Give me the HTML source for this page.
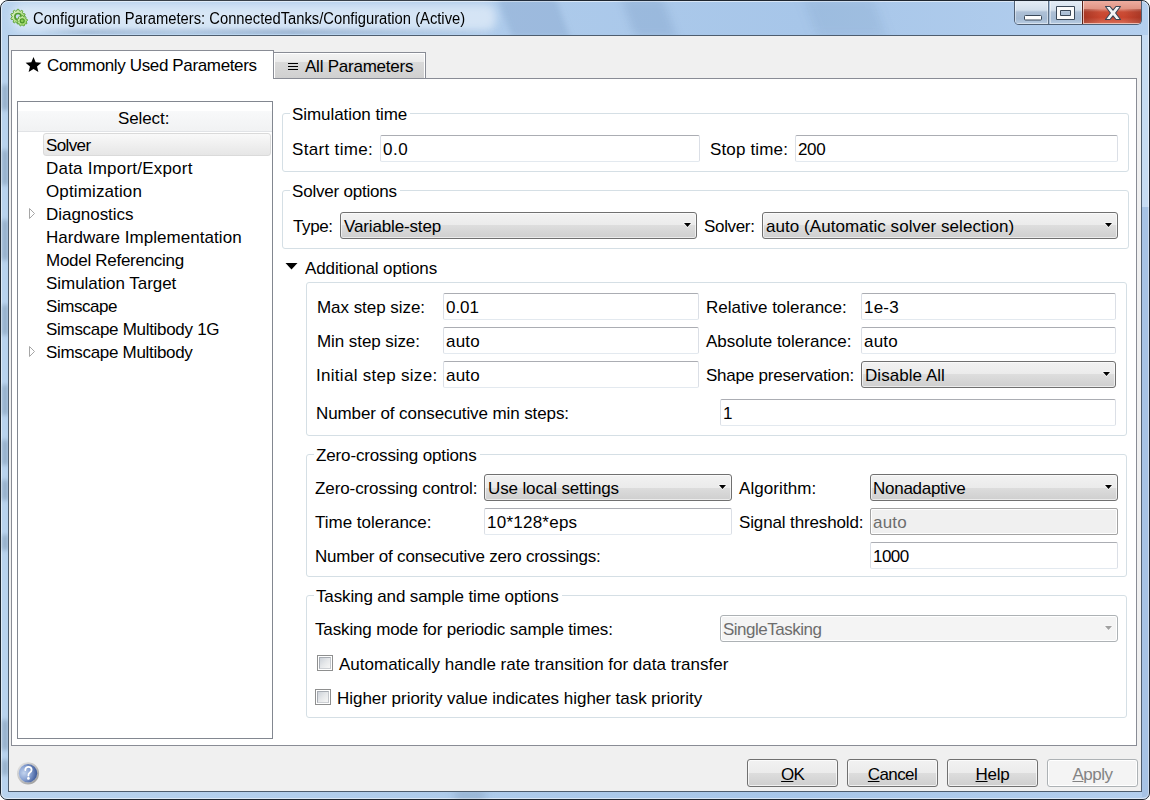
<!DOCTYPE html>
<html><head><meta charset="utf-8">
<style>
*{margin:0;padding:0;box-sizing:border-box}
html,body{width:1150px;height:800px;overflow:hidden;background:#ffffff}
body{position:relative;font-family:"Liberation Sans",sans-serif;font-size:17px;color:#000}
.a{position:absolute}
.t{position:absolute;white-space:nowrap;font-size:17px;line-height:17px;color:#000}
.grp{position:absolute;border:1px solid #d5dfe5;border-radius:3px}
.gt{position:absolute;background:#fff;padding:0 3px 0 2px;white-space:nowrap;font-size:17px;line-height:17px}
.fld{position:absolute;background:#fff;border:1px solid #dbdfe6;border-top-color:#abadb3;border-bottom-color:#e3e9ef;border-radius:2px}
.fld span,.cmb span{position:absolute;left:3px;top:5px;white-space:nowrap;font-size:17px;line-height:17px}
.cmb{position:absolute;border:1px solid #707070;border-radius:3px;
 background:linear-gradient(#f2f2f2 0%,#ebebeb 50%,#dddddd 50%,#cfcfcf 100%);box-shadow:inset 0 0 0 1px rgba(255,255,255,.6)}
.arr{position:absolute;width:0;height:0;border-left:3.5px solid transparent;border-right:3.5px solid transparent;border-top:4px solid #000}
.btn{position:absolute;border:1px solid #707070;border-radius:3px;
 background:linear-gradient(#f2f2f2 0%,#ebebeb 50%,#dddddd 50%,#cfcfcf 100%);box-shadow:inset 0 0 0 1px rgba(255,255,255,.7)}
.btn span{position:absolute;left:0;right:0;top:6px;text-align:center;font-size:17px;line-height:17px}
.chk{position:absolute;width:16px;height:16px;border:1px solid #8e8f8f;background:#fff}
.chk i{position:absolute;left:1px;top:1px;width:12px;height:12px;border:1px solid;border-color:#a7acb3 #c3c7cc #cdd0d4 #a7acb3;background:linear-gradient(135deg,#cdd2d9 0%,#e6e8ea 50%,#f6f6f6 100%)}
u{text-decoration:underline;text-decoration-thickness:1px;text-underline-offset:1px}
</style></head><body>
<!-- window frame -->
<div class="a" style="left:0;top:0;width:1150px;height:800px;border:1px solid #1e2630;border-radius:8px 8px 7px 7px;background:linear-gradient(90deg,#b9d3ee 0%,#aecbeb 40%,#a7c6e9 70%,#b4cfee 100%);overflow:hidden"></div>
<div class="a" style="left:1px;top:1px;width:1148px;height:798px;border:1px solid rgba(255,255,255,.55);border-radius:7px 7px 6px 6px"></div>
<div class="a" style="left:0;top:0;width:1150px;height:35px;overflow:hidden">
  <div class="a" style="left:505px;top:-2px;width:58px;height:40px;background:rgba(60,95,140,.14);filter:blur(3px);transform:skewX(20deg)"></div>
  <div class="a" style="left:628px;top:-2px;width:42px;height:40px;background:rgba(60,95,140,.14);filter:blur(5px);transform:skewX(20deg)"></div>
  <div class="a" style="left:810px;top:-2px;width:70px;height:40px;background:rgba(60,95,140,.10);filter:blur(6px);transform:skewX(20deg)"></div>
  <div class="a" style="left:12px;top:4px;width:484px;height:27px;border-radius:10px;background:rgba(238,245,252,.6);filter:blur(4px)"></div>
</div>
<!-- icon -->
<svg class="a" style="left:9px;top:8px" width="20" height="20" viewBox="0 0 20 20">
  <defs><linearGradient id="gg" x1="0" y1="0" x2="1" y2="1"><stop offset="0" stop-color="#ecf8d8"/><stop offset="1" stop-color="#8fcf58"/></linearGradient>
  <linearGradient id="gg2" x1="0" y1="0" x2="1" y2="1"><stop offset="0" stop-color="#e4f6cc"/><stop offset="1" stop-color="#8ed24e"/></linearGradient></defs>
  <polygon points="14.87,9.19 16.11,10.23 15.68,11.54 14.06,11.63 13.40,12.53 13.80,14.10 12.68,14.90 11.31,14.03 10.25,14.37 9.65,15.87 8.27,15.86 7.68,14.35 6.63,14.00 5.25,14.86 4.14,14.05 4.55,12.48 3.90,11.57 2.28,11.46 1.87,10.15 3.12,9.12 3.13,8.01 1.89,6.97 2.32,5.66 3.94,5.57 4.60,4.67 4.20,3.10 5.32,2.30 6.69,3.17 7.75,2.83 8.35,1.33 9.73,1.34 10.32,2.85 11.37,3.20 12.75,2.34 13.86,3.15 13.45,4.72 14.10,5.63 15.72,5.74 16.13,7.05 14.88,8.08" fill="url(#gg)" stroke="#5fa53a" stroke-width="1" stroke-linejoin="round"/>
  <circle cx="9" cy="8.6" r="3.1" fill="#c9dcf0" stroke="#4f9a2e" stroke-width="1.7"/>
  <polygon points="17.31,14.07 18.00,15.06 17.42,16.00 16.23,15.85 15.53,16.41 15.42,17.61 14.38,17.97 13.56,17.08 12.66,17.07 11.81,17.91 10.78,17.51 10.72,16.31 10.05,15.72 8.85,15.83 8.31,14.85 9.04,13.90 8.91,13.01 7.92,12.32 8.14,11.23 9.31,10.97 9.77,10.20 9.46,9.04 10.33,8.35 11.40,8.90 12.25,8.61 12.76,7.52 13.86,7.54 14.33,8.65 15.16,8.98 16.25,8.47 17.09,9.20 16.73,10.35 17.16,11.13 18.32,11.45 18.49,12.54 17.48,13.19" fill="url(#gg2)" stroke="#5fa53a" stroke-width="1" stroke-linejoin="round"/>
  <circle cx="13.2" cy="12.8" r="2.0" fill="#8ccf55" stroke="#4a9428" stroke-width="1.2"/>
</svg>
<div class="t" style="left: 33px; top: 11px; font-size: 16px; line-height: 16px; transform:scaleX(0.922); transform-origin:0 0;">Configuration Parameters: ConnectedTanks/Configuration (Active)</div>
<!-- caption buttons -->
<div class="a" style="left:1014px;top:0;width:128px;height:25px;border:1px solid #4f5f73;border-top:none;border-radius:0 0 5px 5px;overflow:hidden;background:#a9c0da">
  <div class="a" style="left:0;top:0;width:34px;height:24px;background:linear-gradient(#e6eef7 0%,#d3dfec 42%,#adc0d6 50%,#a3b9d2 78%,#b9cde3 100%);border-right:1px solid #5d6f84;box-shadow:inset 0 0 0 1px rgba(255,255,255,.45)"></div>
  <div class="a" style="left:35px;top:0;width:33px;height:24px;background:linear-gradient(#e6eef7 0%,#d3dfec 42%,#adc0d6 50%,#a3b9d2 78%,#b9cde3 100%);border-right:1px solid #5a2219;box-shadow:inset 0 0 0 1px rgba(255,255,255,.45)"></div>
  <div class="a" style="left:68px;top:0;width:59px;height:24px;background:linear-gradient(#eeb0a4 0%,#e09484 36%,#cb4d36 50%,#c9452e 72%,#d8705a 100%);box-shadow:inset 0 0 0 1px rgba(255,255,255,.55)"></div>
  <div class="a" style="left:69px;top:9px;width:57px;height:14px;background:linear-gradient(90deg,rgba(110,25,15,.35) 0%,rgba(255,120,80,0) 30%,rgba(255,120,80,0) 70%,rgba(110,25,15,.35) 100%)"></div>
  <svg class="a" style="left:0;top:0" width="128" height="25" viewBox="0 0 128 25">
    <rect x="9.5" y="15.5" width="17" height="4.5" rx="1" fill="#fff" stroke="#3a4858" stroke-width="1"/>
    <path d="M41.5 6.5 h18 v13 h-18 z M45.5 10.5 v5 h10 v-5 z" fill="#fbfbfb" fill-rule="evenodd" stroke="#3a4858" stroke-width="1"/>
    <polygon points="90.5,6.5 95,6.5 98,10.2 101,6.5 105.5,6.5 100.6,13 105.5,19.5 101,19.5 98,15.8 95,19.5 90.5,19.5 95.4,13" fill="#f4f4f4" stroke="#3a4656" stroke-width="1.1" stroke-linejoin="round"/>
  </svg>
</div>
<div class="a" style="left:1014px;top:0;width:128px;height:1px;background:#1e2630"></div>
<div class="a" style="left:0;top:35px;width:1150px;height:765px;overflow:hidden">
  <div class="a" style="left:2px;top:50px;width:6px;height:25px;background:rgba(70,95,125,.32);filter:blur(2px)"></div>
  <div class="a" style="left:2px;top:115px;width:6px;height:35px;background:rgba(70,95,125,.32);filter:blur(2px)"></div>
  <div class="a" style="left:2px;top:185px;width:6px;height:40px;background:rgba(70,95,125,.32);filter:blur(2px)"></div>
  <div class="a" style="left:2px;top:270px;width:6px;height:30px;background:rgba(70,95,125,.32);filter:blur(2px)"></div>
  <div class="a" style="left:2px;top:350px;width:6px;height:30px;background:rgba(70,95,125,.32);filter:blur(2px)"></div>
  <div class="a" style="left:2px;top:405px;width:6px;height:25px;background:rgba(70,95,125,.32);filter:blur(2px)"></div>
  <div class="a" style="left:2px;top:445px;width:6px;height:20px;background:rgba(70,95,125,.32);filter:blur(2px)"></div>
  <div class="a" style="left:2px;top:500px;width:6px;height:15px;background:rgba(70,95,125,.32);filter:blur(2px)"></div>
  <div class="a" style="left:2px;top:685px;width:6px;height:30px;background:rgba(70,95,125,.32);filter:blur(2px)"></div>
  <div class="a" style="left:2px;top:725px;width:6px;height:15px;background:rgba(70,95,125,.32);filter:blur(2px)"></div>
  <div class="a" style="left:1142px;top:0;width:7px;height:172px;background:rgba(235,243,252,.35)"></div>
  <div class="a" style="left:1142px;top:172px;width:7px;height:590px;background:rgba(60,100,160,.10)"></div>
</div>
<div class="a" style="left:40px;top:26px;width:460px;height:8px;overflow:hidden"><div class="a" style="left:0;top:3px;width:460px;height:6px;background:linear-gradient(90deg,rgba(80,105,140,0) 0%,rgba(80,105,140,.22) 10%,rgba(80,105,140,.12) 30%,rgba(80,105,140,.25) 55%,rgba(80,105,140,.1) 80%,rgba(80,105,140,0) 100%);filter:blur(1.5px)"></div></div>
<div class="a" style="left:440px;top:792px;width:60px;height:7px;overflow:hidden"><div class="a" style="left:15px;top:0;width:30px;height:7px;background:rgba(70,95,125,.3);filter:blur(4px)"></div></div>
<!-- client -->
<div class="a" style="left:8px;top:35px;width:1134px;height:757px;border:1px solid #4e5d6e;background:#f0f0f0"></div>
<!-- panel -->
<div class="a" style="left:11px;top:78px;width:1126px;height:668px;border:1px solid #898c95;background:#fff"></div>
<!-- active tab -->
<div class="a" style="left:11px;top:50px;width:263px;height:29px;border:1px solid #898c95;border-bottom:none;background:#fff"></div>
<svg class="a" style="left:25px;top:56px" width="17" height="17" viewBox="0 0 17 17"><polygon points="8.50,1.00 10.67,6.31 16.39,6.74 12.02,10.44 13.38,16.01 8.50,13.00 3.62,16.01 4.98,10.44 0.61,6.74 6.33,6.31" fill="#000"></polygon></svg>
<div class="t" style="left: 47px; top: 57px; letter-spacing: -0.357px;">Commonly Used Parameters</div>
<!-- inactive tab -->
<div class="a" style="left:273px;top:52px;width:153px;height:27px;border:1px solid #898c95;background:linear-gradient(#f3f3f3 0%,#ebebeb 35%,#dadada 36%,#d0d0d0 100%);box-shadow:inset 1px 1px 0 #fff,inset -1px 0 0 #fff"></div>
<div class="a" style="left:288px;top:63px;width:10px;height:1px;background:#000"></div>
<div class="a" style="left:288px;top:66px;width:10px;height:1px;background:#000"></div>
<div class="a" style="left:288px;top:69px;width:10px;height:1px;background:#000"></div>
<div class="t" style="left: 305px; top: 58px; letter-spacing: -0.231px;">All Parameters</div>

<!-- list box -->
<div class="a" style="left:17px;top:101px;width:256px;height:638px;border:1px solid #828790;background:#fff"></div>
<div class="a" style="left:18px;top:111px;width:254px;height:21px;background:linear-gradient(#f8f9fa,#f1f2f3);border-bottom:1px solid #e1e3e6"></div>
<div class="t" style="left: 118px; top: 110px; letter-spacing: -0.1px;">Select:</div>
<div class="a" style="left:43px;top:133px;width:228px;height:23px;border:1px solid #dadada;border-radius:3px;background:linear-gradient(#f9f9f9,#e6e6e6)"></div>
<div class="t" style="left: 46px; top: 137px; letter-spacing: -0.62px;">Solver</div>
<div class="t" style="left: 46px; top: 160px; letter-spacing: 0.218px;">Data Import/Export</div>
<div class="t" style="left: 46px; top: 183px; letter-spacing: 0.127px;">Optimization</div>
<div class="t" style="left: 46px; top: 206px; letter-spacing: -0.04px;">Diagnostics</div>
<div class="t" style="left: 46px; top: 229px; letter-spacing: 0.045px;">Hardware Implementation</div>
<div class="t" style="left: 46px; top: 252px; letter-spacing: -0.281px;">Model Referencing</div>
<div class="t" style="left: 46px; top: 275px; letter-spacing: -0.044px;">Simulation Target</div>
<div class="t" style="left: 46px; top: 298px; letter-spacing: -0.457px;">Simscape</div>
<div class="t" style="left: 46px; top: 321px; letter-spacing: -0.3px;">Simscape Multibody 1G</div>
<div class="t" style="left: 46px; top: 344px; letter-spacing: -0.312px;">Simscape Multibody</div>
<svg class="a" style="left:28px;top:207px" width="8" height="13" viewBox="0 0 8 13"><polygon points="1.5,1.5 6.5,6.5 1.5,11.5" fill="none" stroke="#a6a6a6" stroke-width="1"></polygon></svg>
<svg class="a" style="left:28px;top:345px" width="8" height="13" viewBox="0 0 8 13"><polygon points="1.5,1.5 6.5,6.5 1.5,11.5" fill="none" stroke="#a6a6a6" stroke-width="1"></polygon></svg>

<!-- Simulation time -->
<div class="grp" style="left:282px;top:113px;width:847px;height:59px"></div>
<div class="gt" style="left: 290px; top: 106px; letter-spacing: -0.064px;">Simulation time</div>
<div class="t" style="left: 292px; top: 141px; letter-spacing: 0.33px;">Start time:</div>
<div class="fld" style="left:380px;top:135px;width:320px;height:27px"><span style="letter-spacing: 0.5px; left: 2px;">0.0</span></div>
<div class="t" style="left: 710px; top: 141px; letter-spacing: 0.156px;">Stop time:</div>
<div class="fld" style="left:795px;top:135px;width:323px;height:27px"><span style="letter-spacing: -0.35px; left: 2px;">200</span></div>

<!-- Solver options -->
<div class="grp" style="left:282px;top:190px;width:847px;height:59px"></div>
<div class="gt" style="left: 290px; top: 183px; letter-spacing: -0.208px;">Solver options</div>
<div class="t" style="left: 293px; top: 218px; letter-spacing: -0.375px;">Type:</div>
<div class="cmb" style="left:340px;top:212px;width:357px;height:27px"><span style="letter-spacing: -0.142px;">Variable-step</span></div>
<svg class="a" style="left:682px;top:221px" width="11" height="8" viewBox="0 0 11 8"><polygon points="2,2 9,2 5.5,6" fill="#000" stroke="rgba(255,255,255,.9)" stroke-width="1.2" stroke-linejoin="round" paint-order="stroke"/></svg>
<div class="t" style="left: 704px; top: 218px; letter-spacing: -0.333px;">Solver:</div>
<div class="cmb" style="left:762px;top:212px;width:356px;height:27px"><span style="letter-spacing: 0.05px;">auto (Automatic solver selection)</span></div>
<svg class="a" style="left:1103px;top:221px" width="11" height="8" viewBox="0 0 11 8"><polygon points="2,2 9,2 5.5,6" fill="#000" stroke="rgba(255,255,255,.9)" stroke-width="1.2" stroke-linejoin="round" paint-order="stroke"/></svg>

<!-- Additional options -->
<svg class="a" style="left:285px;top:263px" width="13" height="7" viewBox="0 0 13 7"><polygon points="0.5,0 12.5,0 6.5,6.5" fill="#000"></polygon></svg>
<div class="t" style="left: 305px; top: 260px; letter-spacing: -0.118px;">Additional options</div>
<div class="grp" style="left:306px;top:282px;width:821px;height:154px"></div>
<div class="t" style="left: 317px; top: 299px; letter-spacing: -0.046px;">Max step size:</div>
<div class="fld" style="left:443px;top:293px;width:256px;height:27px"><span style="letter-spacing: -0.067px; left: 2px;">0.01</span></div>
<div class="t" style="left: 317px; top: 333px; letter-spacing: -0.077px;">Min step size:</div>
<div class="fld" style="left:443px;top:327px;width:256px;height:27px"><span style="letter-spacing: 0.2px; left: 2px;">auto</span></div>
<div class="t" style="left: 316px; top: 367px; letter-spacing: 0.288px;">Initial step size:</div>
<div class="fld" style="left:443px;top:361px;width:256px;height:27px"><span style="letter-spacing: 0.2px; left: 2px;">auto</span></div>
<div class="t" style="left: 316px; top: 405px; letter-spacing: -0.097px;">Number of consecutive min steps:</div>
<div class="t" style="left:706px;top:299px">Relative tolerance:</div>
<div class="fld" style="left:861px;top:293px;width:255px;height:27px"><span style="letter-spacing: 0.2px; left: 2px;">1e-3</span></div>
<div class="t" style="left:706px;top:333px">Absolute tolerance:</div>
<div class="fld" style="left:861px;top:327px;width:255px;height:27px"><span style="letter-spacing: 0.2px; left: 2px;">auto</span></div>
<div class="t" style="left: 706px; top: 367px; letter-spacing: -0.217px;">Shape preservation:</div>
<div class="cmb" style="left:861px;top:361px;width:255px;height:27px"><span style="letter-spacing: 0.05px;">Disable All</span></div>
<svg class="a" style="left:1101px;top:370px" width="11" height="8" viewBox="0 0 11 8"><polygon points="2,2 9,2 5.5,6" fill="#000" stroke="rgba(255,255,255,.9)" stroke-width="1.2" stroke-linejoin="round" paint-order="stroke"/></svg>
<div class="fld" style="left:720px;top:399px;width:396px;height:27px"><span style="left: 2px;">1</span></div>

<!-- Zero-crossing -->
<div class="grp" style="left:306px;top:454px;width:821px;height:123px"></div>
<div class="gt" style="left: 314px; top: 447px; letter-spacing: -0.14px;">Zero-crossing options</div>
<div class="t" style="left: 315px; top: 480px; letter-spacing: -0.095px;">Zero-crossing control:</div>
<div class="cmb" style="left:484px;top:474px;width:248px;height:27px"><span style="letter-spacing: -0.124px;">Use local settings</span></div>
<svg class="a" style="left:717px;top:483px" width="11" height="8" viewBox="0 0 11 8"><polygon points="2,2 9,2 5.5,6" fill="#000" stroke="rgba(255,255,255,.9)" stroke-width="1.2" stroke-linejoin="round" paint-order="stroke"/></svg>
<div class="t" style="left: 739px; top: 480px; letter-spacing: 0.078px;">Algorithm:</div>
<div class="cmb" style="left:870px;top:474px;width:248px;height:27px"><span style="letter-spacing: -0.27px; left: 2px;">Nonadaptive</span></div>
<svg class="a" style="left:1103px;top:483px" width="11" height="8" viewBox="0 0 11 8"><polygon points="2,2 9,2 5.5,6" fill="#000" stroke="rgba(255,255,255,.9)" stroke-width="1.2" stroke-linejoin="round" paint-order="stroke"/></svg>
<div class="t" style="left:315px;top:514px">Time tolerance:</div>
<div class="fld" style="left:484px;top:508px;width:248px;height:27px"><span style="letter-spacing: 0.244px; left: 2px;">10*128*eps</span></div>
<div class="t" style="left: 739px; top: 514px; letter-spacing: -0.131px;">Signal threshold:</div>
<div class="fld" style="left:870px;top:508px;width:248px;height:27px;background:#f0f0f0;border-color:#a3a3a3;box-shadow:inset 0 0 0 1px #fff"><span style="color: rgb(109, 109, 109); letter-spacing: 0.2px; left: 2px;">auto</span></div>
<div class="t" style="left: 315px; top: 548px; letter-spacing: -0.197px;">Number of consecutive zero crossings:</div>
<div class="fld" style="left:870px;top:542px;width:248px;height:27px"><span style="letter-spacing: -0.533px; left: 2px;">1000</span></div>

<!-- Tasking -->
<div class="grp" style="left:306px;top:595px;width:821px;height:123px"></div>
<div class="gt" style="left: 314px; top: 588px; letter-spacing: -0.133px;">Tasking and sample time options</div>
<div class="t" style="left: 315px; top: 621px; letter-spacing: -0.142px;">Tasking mode for periodic sample times:</div>
<div class="cmb" style="left:720px;top:615px;width:398px;height:27px;background:#f4f4f4;border-color:#adb2b5;box-shadow:inset 0 0 0 1px #fff"><span style="color: rgb(109, 109, 109); letter-spacing: -0.5px; left: 2px;">SingleTasking</span></div>
<svg class="a" style="left:1103px;top:624px" width="11" height="8" viewBox="0 0 11 8"><polygon points="2,2 9,2 5.5,6" fill="#a0a0a0" stroke="rgba(255,255,255,.5)" stroke-width="1.2" stroke-linejoin="round" paint-order="stroke"/></svg>
<div class="chk" style="left:317px;top:655px"><i></i></div>
<div class="t" style="left: 339px; top: 656px;">Automatically handle rate transition for data transfer</div>
<div class="chk" style="left:315px;top:689px"><i></i></div>
<div class="t" style="left: 337px; top: 690px; letter-spacing: -0.029px;">Higher priority value indicates higher task priority</div>

<!-- help icon -->
<svg class="a" style="left:17px;top:762px" width="23" height="23" viewBox="0 0 23 23">
  <defs><radialGradient id="hg" cx="28%" cy="48%" r="78%"><stop offset="0" stop-color="#c3d4ee"/><stop offset="0.45" stop-color="#8aa3d3"/><stop offset="1" stop-color="#2f4c8e"/></radialGradient>
  <linearGradient id="hr" x1="0" y1="0" x2="1" y2="1"><stop offset="0" stop-color="#e6e6e6"/><stop offset="1" stop-color="#9a9a9a"/></linearGradient></defs>
  <circle cx="11" cy="11.3" r="10.1" fill="none" stroke="url(#hr)" stroke-width="2"/>
  <circle cx="11" cy="11.3" r="9.2" fill="url(#hg)"/>
  <path d="M8.3,8.1 C8.3,5.8 9.8,4.8 11.4,4.8 C13.3,4.8 14.6,6 14.6,7.7 C14.6,9.4 13.4,10.2 12.5,10.9 C11.7,11.5 11.4,12.1 11.4,13.5" fill="none" stroke="#fff" stroke-width="1.8" stroke-linecap="round"/>
  <circle cx="11.4" cy="16.4" r="1.35" fill="#fff"/>
</svg>
<!-- buttons -->
<div class="btn" style="left:747px;top:759px;width:91px;height:28px"><span style="letter-spacing: -0.9px;"><u>O</u>K</span></div>
<div class="btn" style="left:847px;top:759px;width:91px;height:28px"><span style="letter-spacing: -0.6px;"><u>C</u>ancel</span></div>
<div class="btn" style="left:947px;top:759px;width:91px;height:28px"><span style="letter-spacing: -0.267px;"><u>H</u>elp</span></div>
<div class="btn" style="left:1047px;top:759px;width:91px;height:28px;background:#f4f4f4;border-color:#adb2b5;box-shadow:inset 0 0 0 1px #fff"><span style="color: rgb(131, 131, 131); letter-spacing: -0.475px;"><u>A</u>pply</span></div>

</body></html>
